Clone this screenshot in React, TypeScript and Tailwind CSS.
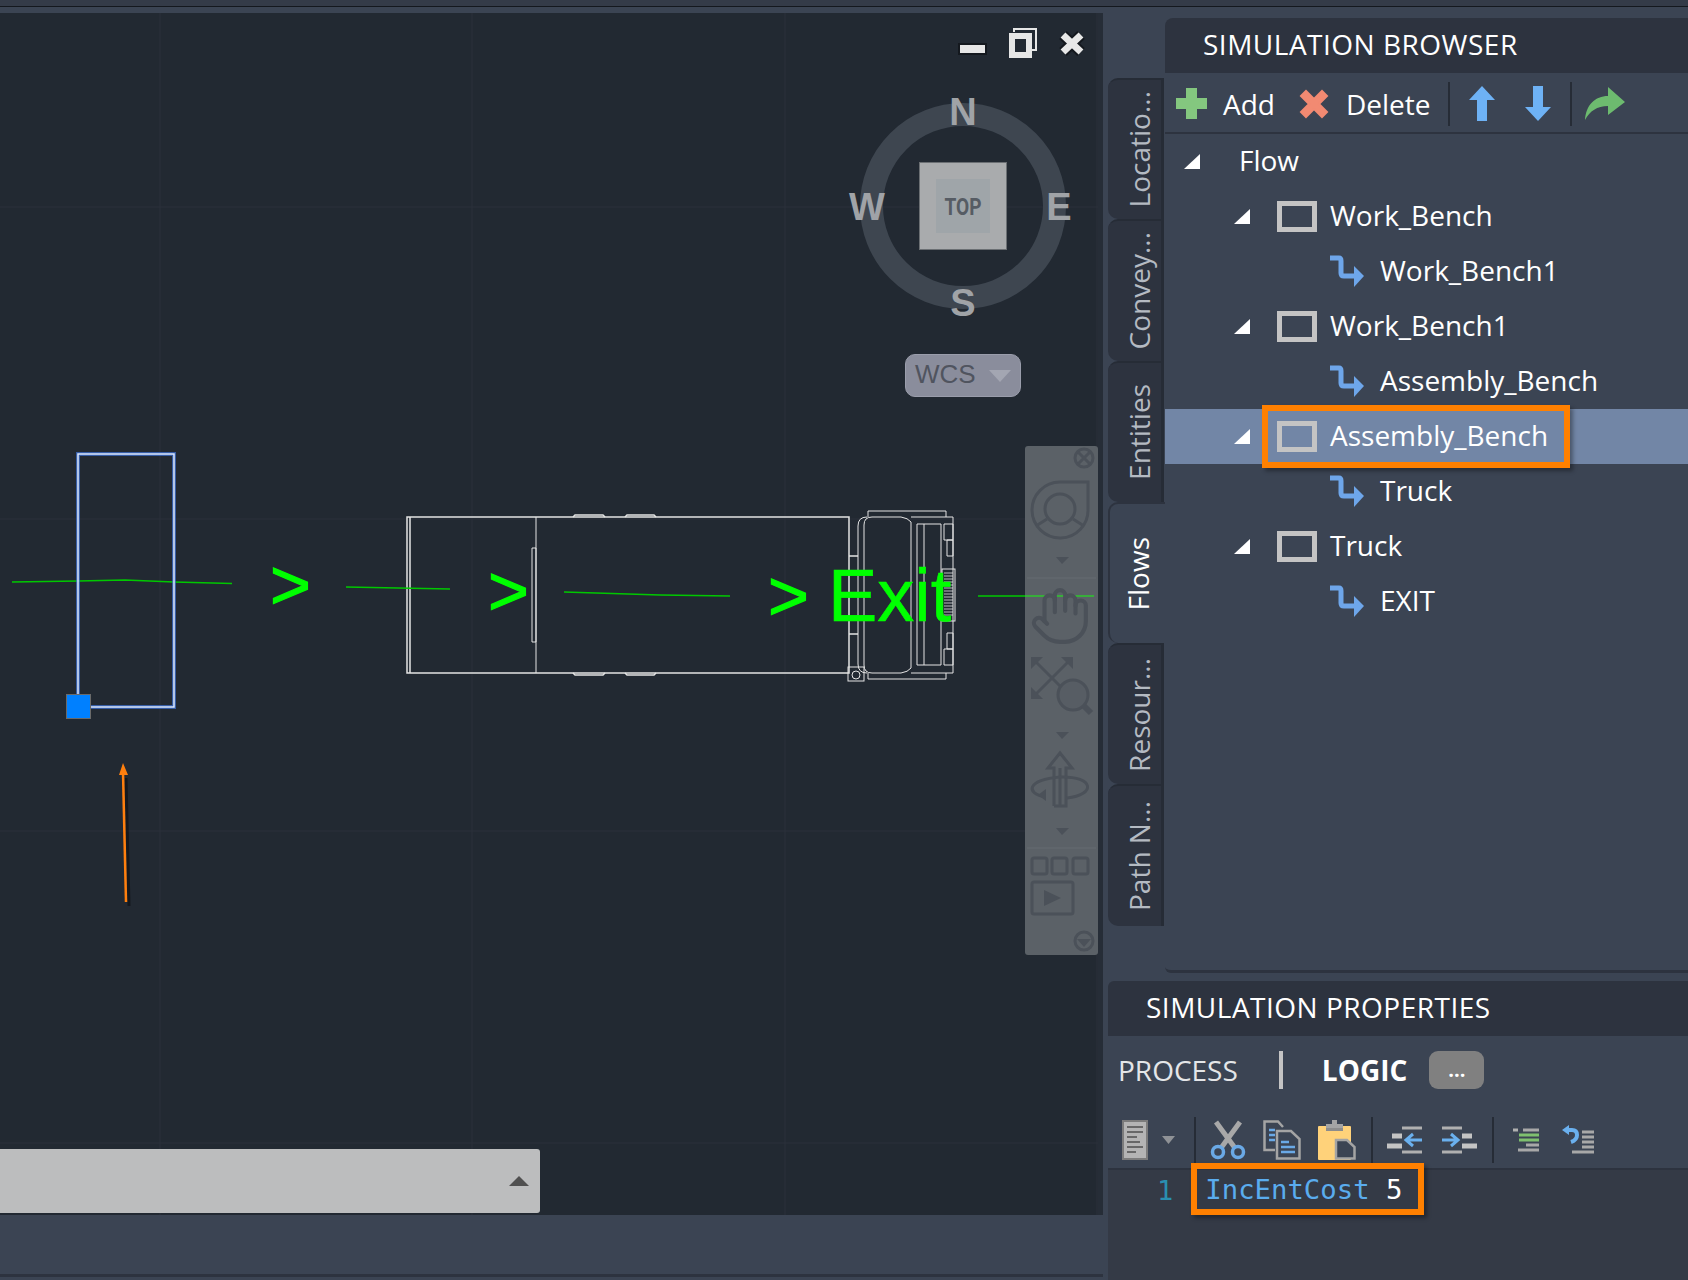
import { Hand } from "lucide-react"

const treeRows = [
  { kind: "root", label: "Flow" },
  { kind: "loc", label: "Work_Bench" },
  { kind: "link", label: "Work_Bench1" },
  { kind: "loc", label: "Work_Bench1" },
  { kind: "link", label: "Assembly_Bench" },
  { kind: "loc", label: "Assembly_Bench", selected: true },
  { kind: "link", label: "Truck" },
  { kind: "loc", label: "Truck" },
  { kind: "link", label: "EXIT" },
]

const sideTabs = ["Locatio...", "Convey...", "Entities", "Flows", "Resour...", "Path N..."]

const Tri = () => (
  <svg width="16" height="15" viewBox="0 0 16 15" className="shrink-0">
    <polygon points="16,0 16,15 0,15" fill="#ffffff" />
  </svg>
)

const BoxIcon = () => (
  <svg width="40" height="31" viewBox="0 0 40 31" className="shrink-0">
    <rect x="2.5" y="2.5" width="35" height="26" fill="none" stroke="#c4c4c4" strokeWidth="5" />
  </svg>
)

const LinkIcon = () => (
  <svg width="35" height="33" viewBox="0 0 35 33" className="shrink-0">
    <path d="M0 3 H9 Q11 3 11 6 V18 Q11 21 14 21 H26" fill="none" stroke="#6ea6ea" strokeWidth="5" />
    <polygon points="24,11 34,21 24,32" fill="#6ea6ea" />
  </svg>
)

const Caret = ({ up }: { up?: boolean }) => (
  <svg width="13" height="8" viewBox="0 0 13 8">
    <polygon points={up ? "0,8 13,8 6.5,0" : "0,0 13,0 6.5,8"} fill="#8f9296" />
  </svg>
)

const Sep = ({ className }: { className: string }) => <div className={"w-[2px] bg-[#262c36] " + className} />

const TreeRow = ({ row }: { row: (typeof treeRows)[number] }) => {
  const text = <span className="text-[28px] leading-none text-white whitespace-nowrap">{row.label}</span>
  if (row.kind === "root") {
    return (
      <div className="h-[55px] flex items-center pl-[19px]">
        <Tri />
        <div className="ml-[39px]">{text}</div>
      </div>
    )
  }
  if (row.kind === "link") {
    return (
      <div className="h-[55px] flex items-center pl-[165px]">
        <LinkIcon />
        <div className="ml-[15px]">{text}</div>
      </div>
    )
  }
  return (
    <div className={row.selected ? "relative h-[55px] flex items-center pl-[69px] bg-[#7286a6]" : "relative h-[55px] flex items-center pl-[69px]"}>
      <Tri />
      <div className="ml-[27px]"><BoxIcon /></div>
      <div className="ml-[13px]">{text}</div>
      {row.selected && (
        <div className="absolute left-[97px] top-[-4px] w-[308px] h-[63px] border-[6px] border-[#ff8000] shadow-[3px_3px_4px_rgba(0,0,0,0.35)]" />
      )}
    </div>
  )
}

const BrowserToolbar = () => (
  <div className="h-[61px] shrink-0 flex items-center border-b-2 border-[#2d333f] pl-[11px] pt-[2px]">
    <svg width="31" height="31" viewBox="0 0 31 31">
      <path d="M10 0 H21 V10 H31 V21 H21 V31 H10 V21 H0 V10 H10 Z" fill="#84c77f" />
    </svg>
    <span className="ml-[16px] text-[28px] leading-none text-white">Add</span>
    <svg width="32" height="32" viewBox="0 0 32 32" className="ml-[23px]">
      <path d="M3 8 L8 3 L16 11 L24 3 L29 8 L21 16 L29 24 L24 29 L16 21 L8 29 L3 24 L11 16 Z" fill="#f28a72" stroke="#f28a72" strokeWidth="2" />
    </svg>
    <span className="ml-[16px] text-[28px] leading-none text-white">Delete</span>
    <Sep className="h-[44px] ml-[17px]" />
    <svg width="26" height="35" viewBox="0 0 26 35" className="ml-[19px]">
      <path d="M13 0 L26 14 H18 V35 H8 V14 H0 Z" fill="#6eb2f5" />
    </svg>
    <svg width="26" height="35" viewBox="0 0 26 35" className="ml-[30px]">
      <path d="M13 35 L26 21 H18 V0 H8 V21 H0 Z" fill="#6eb2f5" />
    </svg>
    <Sep className="h-[44px] ml-[19px]" />
    <svg width="40" height="33" viewBox="0 0 40 33" className="ml-[13px]">
      <path d="M0 33 C1 18 10 9 23 9 V0 L40 15 L23 28 V19 C12 19 5 24 0 33 Z" fill="#6dbb6f" />
    </svg>
  </div>
)

const DocIcon = () => (
  <svg width="26" height="40" viewBox="0 0 26 40">
    <rect x="1" y="1" width="24" height="38" fill="#b4b4b4" stroke="#7c7c7c" strokeWidth="2" />
    <path d="M5 7 H21 M5 12 H21 M5 17 H15 M5 22 H18 M5 27 H21 M5 32 H14" stroke="#686868" strokeWidth="2" />
  </svg>
)

const ScissorsIcon = () => (
  <svg width="36" height="40" viewBox="0 0 36 40">
    <path d="M6 2 L25 28 M30 2 L11 28" stroke="#a8a8a8" strokeWidth="5" fill="none" />
    <circle cx="8" cy="32" r="5.5" fill="none" stroke="#6aa9e6" strokeWidth="3.5" />
    <circle cx="28" cy="32" r="5.5" fill="none" stroke="#6aa9e6" strokeWidth="3.5" />
  </svg>
)

const CopyIcon = () => (
  <svg width="38" height="40" viewBox="0 0 38 40">
    <path d="M12 30 H1.5 V1.5 H15 L20 7" fill="none" stroke="#a4a4a4" strokeWidth="2.5" />
    <path d="M14 11 H28 L36.5 19 V38.5 H14 Z" fill="#3b4453" stroke="#a4a4a4" strokeWidth="2.5" />
    <path d="M6 10 H12 M6 15 H12 M6 20 H12 M18 22 H26 M18 27 H32 M18 32 H32" stroke="#6aa9e6" strokeWidth="2.5" />
  </svg>
)

const PasteIcon = () => (
  <svg width="38" height="40" viewBox="0 0 38 40">
    <rect x="0" y="6" width="33" height="34" rx="1" fill="#ffd27a" />
    <path d="M8 8 V4 H14 V0 H19 V4 H25 V8 Z" fill="#a4a4a4" />
    <rect x="8" y="8" width="17" height="3" fill="#8c8c8c" />
    <path d="M18 20 H29 L36.5 27 V38.5 H18 Z" fill="#3b4453" stroke="#a4a4a4" strokeWidth="2.5" />
  </svg>
)

const OutdentIcon = ({ flip }: { flip?: boolean }) => (
  <svg width="36" height="30" viewBox="0 0 36 30" className={flip ? "-scale-x-100" : ""}>
    <path d="M15 3 H35 M15 27 H35" stroke="#b0b0b0" strokeWidth="3" />
    <path d="M5 11 H15 M0 21 H15" stroke="#c4c4c4" strokeWidth="5" />
    <path d="M35 15 H20 M26 9 L19 15 L26 21" stroke="#6ab0ee" strokeWidth="3" fill="none" />
  </svg>
)

const ListIcon = () => (
  <svg width="26" height="28" viewBox="0 0 26 28">
    <path d="M0 4 H5" stroke="#b0b0b0" strokeWidth="3" />
    <path d="M10 4 H26 M13 19 H26 M5 24 H26" stroke="#a8a8a8" strokeWidth="3" />
    <path d="M6 9 H26 M6 14 H26" stroke="#7fc06f" strokeWidth="3" />
  </svg>
)

const UndoListIcon = () => (
  <svg width="32" height="30" viewBox="0 0 32 30">
    <path d="M20 7 H32 M20 12 H32 M20 17 H32 M20 22 H32 M10 27 H32" stroke="#a8a8a8" strokeWidth="3" />
    <path d="M3 5 H10 Q15 5 15 10 Q15 15 9 17" stroke="#6ab0ee" strokeWidth="4" fill="none" />
    <polygon points="0,5 7,0 7,10" fill="#6ab0ee" />
  </svg>
)

const PropertiesToolbar = () => (
  <div className="h-[66px] shrink-0 flex items-center border-b-2 border-[#2d333f] pl-[14px] pt-[8px]">
    <DocIcon />
    <div className="ml-[14px]"><Caret /></div>
    <Sep className="h-[46px] ml-[19px]" />
    <div className="ml-[14px]"><ScissorsIcon /></div>
    <div className="ml-[17px]"><CopyIcon /></div>
    <div className="ml-[17px]"><PasteIcon /></div>
    <Sep className="h-[46px] ml-[15px]" />
    <div className="ml-[14px]"><OutdentIcon /></div>
    <div className="ml-[18px]"><OutdentIcon flip /></div>
    <Sep className="h-[46px] ml-[15px]" />
    <div className="ml-[19px]"><ListIcon /></div>
    <div className="ml-[23px]"><UndoListIcon /></div>
  </div>
)

// cad drawing, coordinates are page pixels
const CadDrawing = () => (
  <svg className="absolute inset-0" width="1098" height="1202" viewBox="0 13 1098 1202">
    <path d="M160 13 V1215 M472 13 V1215 M785 13 V1215 M1097 13 V1215 M0 207 H1098 M0 519 H1098 M0 831 H1098 M0 1143 H1098" stroke="#2a313b" strokeWidth="1" />

    <g fill="none" stroke="#e4e4e4" strokeWidth="1.5">
      <path d="M407 517 H849 V673 H407 Z M410 517 V673" />
      <path d="M536 517 V673 M532 548 H536 V642 H532 Z" strokeWidth="1" />
      <path d="M573 517 L575 515 H603 L605 517 M625 517 L627 515 H654 L656 517 M573 673 L575 675 H603 L605 673 M625 673 L627 675 H654 L656 673" />
      <path d="M849 556 H858 M849 634 H858" />
      <path d="M867 517 Q858 517 858 526 V664 Q858 673 867 673" strokeWidth="1" />
      <path d="M872 517 H901 Q908 518 911 522 V668 Q908 672 901 673 H872 Q864 673 864 665 V525 Q864 517 872 517 Z" strokeWidth="1" />
      <path d="M868 517 V511 H946 V517 M868 673 V679 H946 V673 M911 517 H953 V673 H911" strokeWidth="1" />
      <path d="M917 524 H941 V665 H917 Z M924 524 V665" strokeWidth="1" />
      <path d="M944 524 H953 V540 H944 Z M947 540 H953 V556 H947 Z M947 633 H953 V649 H947 Z M944 649 H953 V665 H944 Z" strokeWidth="1" />
      <rect x="942" y="569" width="13" height="52" strokeWidth="1" />
      <path d="M944 573 H953 M944 576 H953 M944 579 H953 M944 582 H953 M944 585 H953 M944 588 H953 M944 591 H953 M944 594 H953 M944 597 H953 M944 600 H953 M944 603 H953 M944 606 H953 M944 609 H953 M944 612 H953 M944 615 H953" strokeWidth="1" opacity="0.8" />
      <rect x="848" y="667" width="16" height="14" strokeWidth="1" />
      <circle cx="856" cy="675" r="4" strokeWidth="1" />
    </g>

    <g fill="none" stroke="#00c800" strokeWidth="1.5">
      <path d="M12 582 L78 581 L125 580 L174 582 L232 583.5" />
      <path d="M346 587 L450 589" />
      <path d="M564 592 L660 595 L730 596" />
      <path d="M978 596 H1094" />
    </g>
    <g fill="#00ff00" stroke="#00ff00" fontFamily="'Liberation Sans', sans-serif" fontSize="70">
      <text x="270" y="609" strokeWidth="1.2">&gt;</text>
      <text x="488" y="615" strokeWidth="1.2">&gt;</text>
      <text x="768" y="620" strokeWidth="1.2">&gt;</text>
      <text x="828" y="621" fontSize="74" strokeWidth="0.6">Exit</text>
    </g>

    <rect x="78" y="454" width="96" height="253" fill="none" stroke="#3f74d8" strokeWidth="4" opacity="0.7" />
    <rect x="78" y="454" width="96" height="253" fill="none" stroke="#dce8ff" strokeWidth="1.5" />
    <rect x="66.5" y="694.5" width="24" height="24" fill="#0080ff" stroke="#6a6a6a" strokeWidth="1" />

    <path d="M129 906 L126 778" stroke="#000000" strokeOpacity="0.4" strokeWidth="3" />
    <path d="M126 902 L123 772" stroke="#ff7f0e" strokeWidth="2.5" />
    <polygon points="123,763 128,775 119,775" fill="#ff7f0e" />

    <circle cx="963" cy="206" r="91.5" fill="none" stroke="#3e4650" strokeWidth="23" />
    <rect x="919.5" y="162.5" width="87" height="87" fill="#a9abad" stroke="#6b6f73" strokeWidth="1" />
    <rect x="936" y="179" width="54" height="54" fill="#9fa5a9" />
    <text x="963" y="215" textAnchor="middle" fontFamily="Roboto, sans-serif" fontWeight="700" fontSize="24" fill="#565c64" textLength="37" lengthAdjust="spacingAndGlyphs">TOP</text>
    <g fontFamily="'Liberation Sans', sans-serif" fontWeight="700" fontSize="38" fill="#a0a3a7" textAnchor="middle">
      <text x="963" y="125">N</text>
      <text x="867" y="220">W</text>
      <text x="1059" y="220">E</text>
      <text x="963" y="316">S</text>
    </g>

    <rect x="959" y="44" width="27" height="10" fill="#e6e6e6" stroke="#14181e" strokeWidth="2" />
    <path d="M1014 32 V29 H1036 V50 H1032" fill="none" stroke="#e6e6e6" strokeWidth="2" />
    <rect x="1012" y="36" width="17" height="19" fill="none" stroke="#e6e6e6" strokeWidth="6" />
    <path d="M1063 35 L1081 52 M1081 35 L1063 52" stroke="#14181e" strokeWidth="11" />
    <path d="M1063 35 L1081 52 M1081 35 L1063 52" stroke="#e8e8e8" strokeWidth="7" />
  </svg>
)

const NavBar = () => (
  <div className="absolute left-[1025px] top-[433px] w-[73px] h-[509px] rounded-[3px] bg-[#5b6167]">
    <svg width="73" height="509" viewBox="1025 446 73 509" className="block">
      <g fill="none" stroke="#4b5159" strokeWidth="3">
        <circle cx="1084" cy="458" r="9" />
        <path d="M1078 452 L1090 464 M1090 452 L1078 464" />
        <path d="M1060 482 H1088 V509 A28 28 0 1 1 1060 482 Z" />
        <circle cx="1060" cy="509" r="15" />
        <path d="M1047 519 L1036 526 M1073 519 L1084 526" />
        <path d="M1032 658 L1072 698 M1072 658 L1032 698" />
        <circle cx="1073" cy="695" r="15" fill="#575d64" />
        <path d="M1084 706 L1091 713" strokeWidth="6" />
        <path d="M1060 806 V768 M1054 806 H1066 V768 H1072 L1060 753 L1048 768 H1054 V806" />
        <path d="M1045 797 C1025 793 1027 780 1060 777 C1095 776 1096 795 1067 798" />
        <rect x="1032" y="858" width="15" height="16" rx="2" />
        <rect x="1052" y="858" width="15" height="16" rx="2" />
        <rect x="1073" y="858" width="15" height="16" rx="2" />
        <rect x="1032" y="882" width="41" height="32" rx="2" />
        <circle cx="1084" cy="941" r="9" />
      </g>
      <g fill="#4b5159">
        <polygon points="1056,557 1069,557 1062,564" />
        <polygon points="1056,732 1069,732 1062,739" />
        <polygon points="1056,828 1069,828 1062,835" />
        <polygon points="1044,890 1061,898 1044,906" />
        <polygon points="1038,795 1046,789 1046,801" />
        <path d="M1077 939 H1091 L1084 947 Z" />
        <polygon points="1031,657 1043,657 1031,669" />
        <polygon points="1073,657 1061,657 1073,669" />
        <polygon points="1031,699 1043,699 1031,687" />
      </g>
      <path d="M1027 578 H1096 M1027 848 H1096" stroke="#666c72" strokeWidth="1" />
      <path d="M1025 596 H1094" stroke="#2dc72d" strokeWidth="1.5" />
      <Hand x="1028" y="585" width="64" height="62" stroke="#4b5159" strokeWidth={1.6} />
    </svg>
  </div>
)

export default function App() {
  return (
    <div className="w-[1688px] h-[1280px] overflow-hidden flex flex-col bg-[#3b4453] font-['Open_Sans',sans-serif]">
      <div className="h-[13px] shrink-0">
        <div className="h-[7px] border-b border-[#14181e] bg-[#343b48]" />
      </div>

      <div className="flex flex-1 min-h-0">
        <div className="w-[1103px] shrink-0 flex flex-col">
          <div className="relative h-[1202px] shrink-0 bg-[#222932] border-r-[5px] border-[#262d37]">
            <CadDrawing />
            <div className="absolute left-[905px] top-[341px] w-[116px] h-[43px] rounded-[10px] border border-[#9a9dab] bg-[#8a8d9c] flex items-center pl-[9px] gap-[13px]">
              <span className="font-['Liberation_Sans',sans-serif] text-[26px] leading-none text-[#50545f] mb-[4px]">WCS</span>
              <svg width="22" height="12" viewBox="0 0 22 12">
                <polygon points="0,0 22,0 11,12" fill="#a3a6b2" />
              </svg>
            </div>
            <NavBar />
            <div className="absolute left-0 top-[1136px] w-[540px] h-[64px] rounded-r-[3px] bg-[#bcbdbe] flex items-center justify-end pr-[11px]">
              <svg width="20" height="10" viewBox="0 0 20 10">
                <polygon points="0,10 20,10 10,0" fill="#505050" />
              </svg>
            </div>
          </div>
          <div className="h-[62px] shrink-0 border-b-[3px] border-[#2d333f]" />
        </div>

        <div className="flex-1 min-w-0 flex flex-col">
          <div className="h-[968px] shrink-0 flex">
            <div className="w-[62px] shrink-0 pl-[5px] pt-[65px]">
              {sideTabs.map((tab) => (
                <div
                  key={tab}
                  className={
                    tab === "Flows"
                      ? "w-[57px] h-[141.3px] rounded-l-[10px] bg-[#3b4453] border-l-2 border-t-2 border-[#2d333f] flex items-center justify-center"
                      : "w-[56px] h-[141.3px] rounded-l-[10px] bg-[#2d333f] border-t-2 border-r-[3px] border-[#262c36] flex items-center justify-center pl-[9px]"
                  }
                >
                  <span
                    className={
                      tab === "Flows"
                        ? "[writing-mode:vertical-rl] rotate-180 text-[28px] leading-none whitespace-nowrap text-white"
                        : "[writing-mode:vertical-rl] rotate-180 text-[28px] leading-none whitespace-nowrap text-[#b4bac2]"
                    }
                  >
                    {tab}
                  </span>
                </div>
              ))}
            </div>

            <div className="flex-1 min-w-0 mt-[5px] flex flex-col">
              <div className="h-[55px] shrink-0 rounded-tl-[8px] bg-[#2d333f] flex items-center pl-[38px] pb-[4px]">
                <span className="text-[28px] leading-none tracking-[0.5px] text-white">SIMULATION BROWSER</span>
              </div>
              <BrowserToolbar />
              <div className="flex-1 rounded-bl-[6px] border-b-[3px] border-[#2d333f] mb-[8px]">
                {treeRows.map((row, i) => (
                  <TreeRow key={i} row={row} />
                ))}
              </div>
            </div>
          </div>

          <div className="flex-1 min-h-0 ml-[5px] flex flex-col">
            <div className="h-[55px] shrink-0 rounded-tl-[6px] bg-[#2d333f] flex items-center pl-[38px] pb-[3px]">
              <span className="text-[28px] leading-none tracking-[0.5px] text-white">SIMULATION PROPERTIES</span>
            </div>
            <div className="h-[68px] shrink-0 flex items-center pl-[10px]">
              <span className="text-[28px] leading-none text-[#e4e6e8]">PROCESS</span>
              <div className="w-[4px] h-[38px] bg-[#c4c4c4] ml-[41px]" />
              <span className="ml-[39px] text-[28px] leading-none font-bold text-white">LOGIC</span>
              <div className="ml-[22px] w-[55px] h-[38px] rounded-[9px] bg-[#808080] flex items-center justify-center">
                <span className="text-[20px] leading-none font-bold text-white">...</span>
              </div>
            </div>
            <PropertiesToolbar />
            <div className="flex-1 bg-[#343a46]">
              <div className="relative h-[40px] flex items-center">
                <span className="ml-[49px] font-['DejaVu_Sans_Mono',monospace] text-[27px] leading-none text-[#2a8fb0]">1</span>
                <span className="ml-[32px] font-['DejaVu_Sans_Mono',monospace] text-[27.3px] leading-none whitespace-pre text-[#5aacee]">
                  IncEntCost <span className="text-white">5</span>
                </span>
                <div className="absolute left-[83px] top-[-7px] w-[233px] h-[52px] border-[6px] border-[#ff8000] shadow-[3px_3px_4px_rgba(0,0,0,0.35)]" />
              </div>
            </div>
          </div>
        </div>
      </div>
    </div>
  )
}
